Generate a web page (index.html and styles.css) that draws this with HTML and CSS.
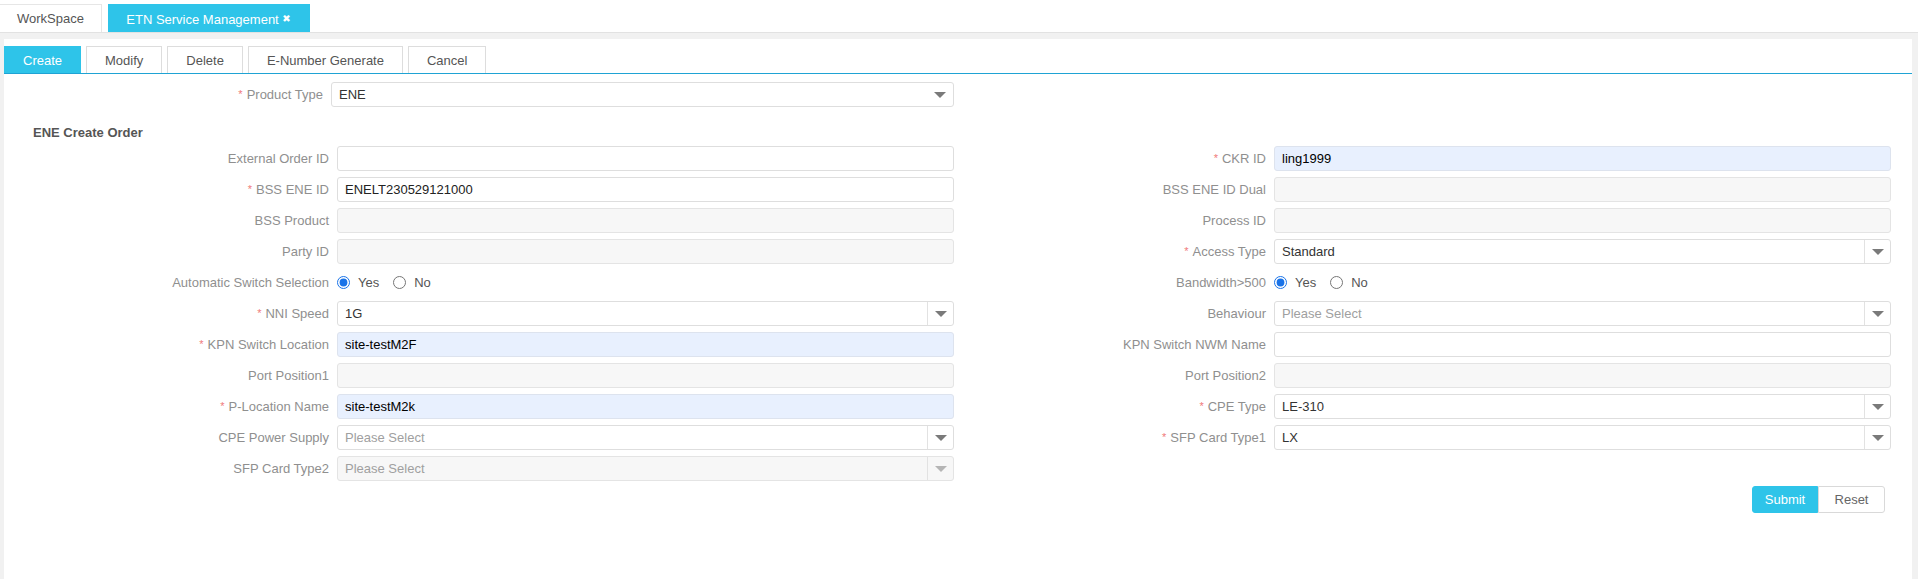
FILE: index.html
```html
<!DOCTYPE html>
<html lang="en">
<head>
<meta charset="utf-8">
<title>ETN Service Management</title>
<link rel="stylesheet" href="styles.css">
</head>
<body>
<div class="topbar">
  <div class="tab">WorkSpace</div>
  <div class="tab tab-active">ETN Service Management <span class="tab-close">✖</span></div>
</div>
<div class="main">
  <div class="panel">
    <div class="toolbar">
      <button class="tbtn tbtn-primary">Create</button>
      <button class="tbtn">Modify</button>
      <button class="tbtn">Delete</button>
      <button class="tbtn">E-Number Generate</button>
      <button class="tbtn">Cancel</button>
    </div>

    <div class="type-row">
      <label class="lbl type-lbl"><span class="req">*</span>Product Type</label>
      <div class="sel sel-plain"><span class="sel-val">ENE</span><span class="sel-arrow"><i class="tri"></i></span></div>
    </div>

    <div class="section-title">ENE Create Order</div>

    <div class="form-grid">
      <div class="field"><label class="lbl">External Order ID</label><input class="inp" type="text" value=""></div>
      <div class="field"><label class="lbl"><span class="req">*</span>CKR ID</label><input class="inp inp-auto" type="text" value="ling1999"></div>

      <div class="field"><label class="lbl"><span class="req">*</span>BSS ENE ID</label><input class="inp" type="text" value="ENELT230529121000"></div>
      <div class="field"><label class="lbl">BSS ENE ID Dual</label><input class="inp inp-dis" type="text" value="" disabled></div>

      <div class="field"><label class="lbl">BSS Product</label><input class="inp inp-dis" type="text" value="" disabled></div>
      <div class="field"><label class="lbl">Process ID</label><input class="inp inp-dis" type="text" value="" disabled></div>

      <div class="field"><label class="lbl">Party ID</label><input class="inp inp-dis" type="text" value="" disabled></div>
      <div class="field"><label class="lbl"><span class="req">*</span>Access Type</label><div class="sel"><span class="sel-val">Standard</span><span class="sel-arrow"><i class="tri"></i></span></div></div>

      <div class="field"><label class="lbl">Automatic Switch Selection</label>
        <div class="radios">
          <label class="radio"><input type="radio" name="auto" checked><span>Yes</span></label>
          <label class="radio"><input type="radio" name="auto"><span>No</span></label>
        </div>
      </div>
      <div class="field"><label class="lbl">Bandwidth&gt;500</label>
        <div class="radios">
          <label class="radio"><input type="radio" name="bw" checked><span>Yes</span></label>
          <label class="radio"><input type="radio" name="bw"><span>No</span></label>
        </div>
      </div>

      <div class="field"><label class="lbl"><span class="req">*</span>NNI Speed</label><div class="sel"><span class="sel-val">1G</span><span class="sel-arrow"><i class="tri"></i></span></div></div>
      <div class="field"><label class="lbl">Behaviour</label><div class="sel"><span class="sel-val sel-ph">Please Select</span><span class="sel-arrow"><i class="tri"></i></span></div></div>

      <div class="field"><label class="lbl"><span class="req">*</span>KPN Switch Location</label><input class="inp inp-auto" type="text" value="site-testM2F"></div>
      <div class="field"><label class="lbl">KPN Switch NWM Name</label><input class="inp" type="text" value=""></div>

      <div class="field"><label class="lbl">Port Position1</label><input class="inp inp-dis" type="text" value="" disabled></div>
      <div class="field"><label class="lbl">Port Position2</label><input class="inp inp-dis" type="text" value="" disabled></div>

      <div class="field"><label class="lbl"><span class="req">*</span>P-Location Name</label><input class="inp inp-auto" type="text" value="site-testM2k"></div>
      <div class="field"><label class="lbl"><span class="req">*</span>CPE Type</label><div class="sel"><span class="sel-val">LE-310</span><span class="sel-arrow"><i class="tri"></i></span></div></div>

      <div class="field"><label class="lbl">CPE Power Supply</label><div class="sel"><span class="sel-val sel-ph">Please Select</span><span class="sel-arrow"><i class="tri"></i></span></div></div>
      <div class="field"><label class="lbl"><span class="req">*</span>SFP Card Type1</label><div class="sel"><span class="sel-val">LX</span><span class="sel-arrow"><i class="tri"></i></span></div></div>

      <div class="field"><label class="lbl">SFP Card Type2</label><div class="sel sel-dis"><span class="sel-val sel-ph">Please Select</span><span class="sel-arrow"><i class="tri"></i></span></div></div>
    </div>

    <div class="actions">
      <button class="abtn abtn-submit">Submit</button>
      <button class="abtn abtn-reset">Reset</button>
    </div>
  </div>
</div>
</body>
</html>
```

FILE: styles.css
```css
* { box-sizing: border-box; }

html, body {
  margin: 0;
  padding: 0;
  height: 100%;
}

body {
  background: #f1f1f1;
  font-family: "Liberation Sans", Arial, sans-serif;
  font-size: 13px;
  color: #555;
  overflow: hidden;
}

/* top tabs */
.topbar {
  height: 33px;
  background: #fff;
  border-bottom: 1px solid #e2e2e2;
  padding-top: 4px;
  display: flex;
  gap: 6px;
}

.tab {
  height: 28px;
  line-height: 28px;
  font-size: 13px;
  color: #555;
  text-align: center;
  border: 1px solid #e6e6e6;
  border-bottom: none;
  border-left: none;
  width: 102px;
  background: #fff;
}

.tab-active {
  width: 202px;
  background: #2ec4e9;
  border-color: #2ec4e9;
  color: #fff;
}

.tab-close {
  font-family: "DejaVu Sans", sans-serif;
  font-size: 10px;
  font-weight: bold;
  vertical-align: 2px;
}

/* main panel */
.main {
  padding: 6px 6px 0 4px;
  height: calc(100% - 33px);
}

.panel {
  background: #fff;
  height: 100%;
}

.toolbar {
  padding-top: 7px;
  display: flex;
  gap: 5px;
  border-bottom: 1px solid #1fa3d4;
  width: 100%;
}

.tbtn {
  height: 27px;
  padding: 0 18px;
  border: 1px solid #ddd;
  border-bottom: none;
  background: #fff;
  color: #555;
  font-family: "Liberation Sans", Arial, sans-serif;
  font-size: 13px;
  cursor: pointer;
}

.tbtn-primary {
  background: #2ec4e9;
  border-color: #2ec4e9;
  color: #fff;
}

/* labels */
.lbl {
  color: #8f8f8f;
  font-size: 13px;
  text-align: right;
  white-space: nowrap;
}

.req {
  color: #f07a7a;
  font-size: 11px;
  margin-right: 4px;
  vertical-align: 1px;
}

/* product type */
.type-row {
  display: flex;
  align-items: center;
  margin-top: 8px;
  padding-left: 13px;
  gap: 8px;
}

.type-lbl {
  width: 306px;
}

.section-title {
  margin: 18px 0 5px 29px;
  font-weight: bold;
  color: #555;
  font-size: 13px;
  line-height: 16px;
  height: 16px;
}

/* form grid */
.form-grid {
  display: grid;
  grid-template-columns: 937px 937px;
  row-gap: 6px;
  padding-left: 13px;
}

.field {
  display: flex;
  align-items: center;
  gap: 8px;
  height: 25px;
}

.field .lbl {
  width: 312px;
}

.inp {
  width: 617px;
  height: 25px;
  border: 1px solid #dedede;
  border-radius: 3px;
  padding: 0 7px;
  font-family: "Liberation Sans", Arial, sans-serif;
  font-size: 13px;
  color: #222;
  background: #fff;
  outline: none;
}

.inp-dis {
  background: #f7f7f7;
  border-color: #e4e4e4;
}

.inp-auto {
  background: #e8f0fe;
  border-color: #dde3ee;
  color: #000;
}

.sel {
  width: 617px;
  height: 25px;
  border: 1px solid #dedede;
  border-radius: 3px;
  background: #fff;
  display: flex;
  align-items: center;
}

.type-row .sel-plain {
  width: 623px;
}

.sel-val {
  flex: 1;
  padding-left: 7px;
  color: #333;
  font-size: 13px;
}

.sel-ph {
  color: #a0a0a0;
}

.sel-arrow {
  width: 26px;
  height: 100%;
  border-left: 1px solid #e2e2e2;
  display: flex;
  align-items: center;
  justify-content: center;
}

.sel-plain .sel-arrow {
  border-left: none;
}

.tri {
  display: block;
  width: 0;
  height: 0;
  border-left: 6px solid transparent;
  border-right: 6px solid transparent;
  border-top: 6px solid #7a7a7a;
}

.sel-dis {
  background: #f7f7f7;
  border-color: #e4e4e4;
}

.sel-dis .tri {
  border-top-color: #b5b5b5;
}

/* radios */
.radios {
  display: flex;
  align-items: center;
  gap: 14px;
}

.radio {
  display: flex;
  align-items: center;
  gap: 8px;
  color: #555;
  font-size: 13px;
}

.radio input {
  margin: 0;
  width: 13px;
  height: 13px;
  accent-color: #1a73e8;
}

/* actions */
.actions {
  display: flex;
  justify-content: flex-end;
  width: 1887px;
  padding-right: 6px;
  margin-top: 5px;
}

.abtn {
  height: 27px;
  width: 66px;
  font-family: "Liberation Sans", Arial, sans-serif;
  font-size: 13px;
  cursor: pointer;
}

.abtn-submit {
  background: #2ec4e9;
  color: #fff;
  border: 1px solid #2ec4e9;
  border-radius: 3px 0 0 3px;
}

.abtn-reset {
  width: 67px;
  background: #fff;
  color: #666;
  border: 1px solid #d9d9d9;
  border-radius: 0 3px 3px 0;
}
```
